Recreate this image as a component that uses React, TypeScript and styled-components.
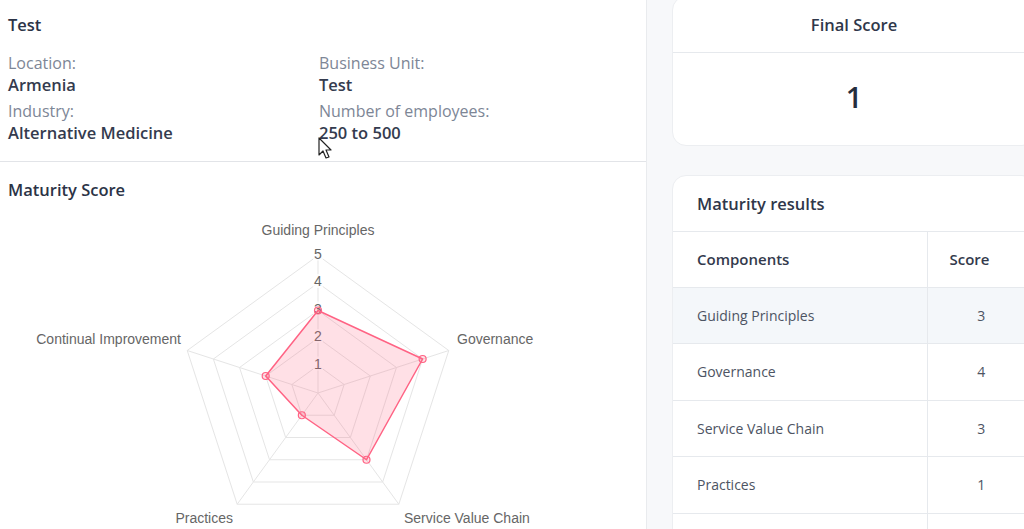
import React from "react";
import styled, { createGlobalStyle } from "styled-components";

type Axis = { label: string; value: number };

const axes: Axis[] = [
  { label: "Guiding Principles", value: 3 },
  { label: "Governance", value: 4 },
  { label: "Service Value Chain", value: 3 },
  { label: "Practices", value: 1 },
  { label: "Continual Improvement", value: 2 },
];

const CX = 318;
const CY = 393;
const R = 137.5;
const STEPS = 5;

function point(index: number, radius: number): [number, number] {
  const angle = (index * 2 * Math.PI) / axes.length;
  return [CX + radius * Math.sin(angle), CY - radius * Math.cos(angle)];
}

const labelPlacement = [
  { x: 318, y: 230, anchor: "middle" },
  { x: 457, y: 339, anchor: "start" },
  { x: 404, y: 518, anchor: "start" },
  { x: 233, y: 518, anchor: "end" },
  { x: 181, y: 339, anchor: "end" },
];

export default function App() {
  return (
    <>
      <GlobalStyle />
      <Page>
        <LeftPanel>
          <InfoSection>
            <SectionTitle>Test</SectionTitle>
            <InfoGrid>
              <InfoItem>
                <InfoLabel>Location:</InfoLabel>
                <InfoValue>Armenia</InfoValue>
              </InfoItem>
              <InfoItem>
                <InfoLabel>Business Unit:</InfoLabel>
                <InfoValue>Test</InfoValue>
              </InfoItem>
              <InfoItem>
                <InfoLabel>Industry:</InfoLabel>
                <InfoValue>Alternative Medicine</InfoValue>
              </InfoItem>
              <InfoItem>
                <InfoLabel>Number of employees:</InfoLabel>
                <InfoValue>250 to 500</InfoValue>
                <Cursor width="16" height="24" viewBox="0 0 16 24">
                  <path
                    d="M1 1 L1 18 L5 14 L8 21 L11 20 L8 13 L13 13 Z"
                    fill="#fff"
                    stroke="#222"
                    strokeWidth="1.2"
                    strokeLinejoin="round"
                  />
                </Cursor>
              </InfoItem>
            </InfoGrid>
          </InfoSection>
          <ChartSection>
            <SectionTitle>Maturity Score</SectionTitle>
            <RadarChart />
          </ChartSection>
        </LeftPanel>
        <RightColumn>
          <Card $cutTop>
            <CardHeader $center>Final Score</CardHeader>
            <ScoreBody>1</ScoreBody>
          </Card>
          <Card>
            <CardHeader>Maturity results</CardHeader>
            <Table>
              <thead>
                <tr>
                  <HeadCell>Components</HeadCell>
                  <HeadCell $score>Score</HeadCell>
                </tr>
              </thead>
              <tbody>
                {axes.slice(0, 4).map((a, i) => (
                  <Row key={a.label} $shaded={i === 0}>
                    <Cell>{a.label}</Cell>
                    <Cell $score>{a.value}</Cell>
                  </Row>
                ))}
                {/* next row continues below the fold */}
                <Row $shaded={false}>
                  <Cell />
                  <Cell $score />
                </Row>
              </tbody>
            </Table>
          </Card>
        </RightColumn>
      </Page>
    </>
  );
}

function RadarChart() {
  const rings = Array.from({ length: STEPS }, (_, i) => ((i + 1) * R) / STEPS);
  const data = axes.map((a, i) => point(i, (a.value * R) / STEPS));

  return (
    <ChartSvg width="647" height="324" viewBox="0 205 647 324">
      {rings.map((r) => (
        <polygon
          key={r}
          points={axes.map((_, i) => point(i, r).join(",")).join(" ")}
          fill="none"
          stroke="#e5e5e5"
          strokeWidth="1"
        />
      ))}
      {axes.map((_, i) => {
        const [x, y] = point(i, R);
        return <line key={i} x1={CX} y1={CY} x2={x} y2={y} stroke="#e5e5e5" />;
      })}
      {rings.map((r, i) => (
        <g key={`t${i}`}>
          <rect x={CX - 5} y={CY - r - 9} width="10" height="14" fill="rgba(255,255,255,0.75)" />
          <TickText x={CX} y={CY - r - 2} textAnchor="middle" dominantBaseline="central">
            {i + 1}
          </TickText>
        </g>
      ))}
      <polygon
        points={data.map((p) => p.join(",")).join(" ")}
        fill="rgba(255,99,132,0.2)"
        stroke="rgb(255,99,132)"
        strokeWidth="1.5"
        strokeLinejoin="round"
      />
      {data.map(([x, y], i) => (
        <circle key={i} cx={x} cy={y} r="3.5" fill="rgba(255,99,132,0.2)" stroke="rgb(255,99,132)" strokeWidth="1.2" />
      ))}
      {axes.map((a, i) => (
        <PointLabel
          key={a.label}
          x={labelPlacement[i].x}
          y={labelPlacement[i].y}
          textAnchor={labelPlacement[i].anchor}
          dominantBaseline="central"
        >
          {a.label}
        </PointLabel>
      ))}
    </ChartSvg>
  );
}

const GlobalStyle = createGlobalStyle`
  html, body {
    margin: 0;
    padding: 0;
    overflow: hidden;
    background: #f7f8fa;
    font-family: "Open Sans", "Noto Sans", sans-serif;
  }
`;

const Page = styled.div`
  display: flex;
  height: 529px;
  width: 1100px;
  background: #f7f8fa;
  overflow: hidden;
`;

const LeftPanel = styled.div`
  width: 646px;
  flex-shrink: 0;
  background: #ffffff;
  border-right: 1px solid #e9ebee;
  display: flex;
  flex-direction: column;
`;

const InfoSection = styled.div`
  padding: 14px 8px 18px;
  border-bottom: 1px solid #e2e4e8;
`;

const SectionTitle = styled.div`
  font-size: 16.5px;
  font-weight: 600;
  color: #2b3346;
  line-height: 22px;
`;

const InfoGrid = styled.div`
  display: grid;
  grid-template-columns: 311px 1fr;
  row-gap: 5px;
  margin-top: 16px;
`;

const InfoItem = styled.div`
  position: relative;
  display: flex;
  flex-direction: column;
`;

const InfoLabel = styled.span`
  font-size: 16px;
  line-height: 22px;
  color: #7d8696;
`;

const InfoValue = styled.span`
  font-size: 16.5px;
  line-height: 21px;
  font-weight: 600;
  color: #343b4e;
`;

const Cursor = styled.svg`
  position: absolute;
  left: -1px;
  top: 37px;
`;

const ChartSection = styled.div`
  padding: 17px 8px 0;
  display: flex;
  flex-direction: column;
`;

const ChartSvg = styled.svg`
  display: block;
  flex-shrink: 0;
  margin: 4px 0 0 -8px;
`;

const TickText = styled.text`
  font-family: "Liberation Sans", Arial, sans-serif;
  font-size: 14px;
  fill: #666666;
`;

const PointLabel = styled.text`
  font-family: "Liberation Sans", Arial, sans-serif;
  font-size: 14px;
  fill: #666666;
`;

const RightColumn = styled.div`
  display: flex;
  flex-direction: column;
  gap: 29px;
  padding-left: 25px;
`;

const Card = styled.div<{ $cutTop?: boolean }>`
  flex-shrink: 0;
  width: 362px;
  background: #ffffff;
  border: 1px solid #eceef1;
  border-radius: 14px;
  overflow: hidden;
  margin-top: ${(p) => (p.$cutTop ? "-4px" : "0")};
`;

const CardHeader = styled.div<{ $center?: boolean }>`
  height: 55px;
  display: flex;
  align-items: center;
  justify-content: ${(p) => (p.$center ? "center" : "flex-start")};
  padding: 0 24px;
  font-size: 16.5px;
  font-weight: 600;
  color: #2f374a;
  border-bottom: 1px solid #e6e9ed;
`;

const ScoreBody = styled.div`
  height: 86px;
  padding-bottom: 6px;
  display: flex;
  align-items: center;
  justify-content: center;
  font-size: 29px;
  font-weight: 600;
  color: #252d3d;
`;

const Table = styled.table`
  width: 100%;
  border-collapse: collapse;
  font-size: 14px;
`;

const HeadCell = styled.th<{ $score?: boolean }>`
  height: 55px;
  padding: 0 0 0 ${(p) => (p.$score ? "22px" : "24px")};
  text-align: left;
  font-size: 15px;
  font-weight: 600;
  color: #333a4c;
  width: ${(p) => (p.$score ? "108px" : "auto")};
  border-left: ${(p) => (p.$score ? "1px solid #e6e9ed" : "none")};
  box-sizing: border-box;
`;

const Row = styled.tr<{ $shaded: boolean }>`
  background: ${(p) => (p.$shaded ? "#f4f7fa" : "#ffffff")};
  border-top: 1px solid #e6e9ed;
`;

const Cell = styled.td<{ $score?: boolean }>`
  height: 55.5px;
  padding: 0 ${(p) => (p.$score ? "0" : "24px")};
  text-align: ${(p) => (p.$score ? "center" : "left")};
  color: #4d5463;
  border-left: ${(p) => (p.$score ? "1px solid #e6e9ed" : "none")};
`;
